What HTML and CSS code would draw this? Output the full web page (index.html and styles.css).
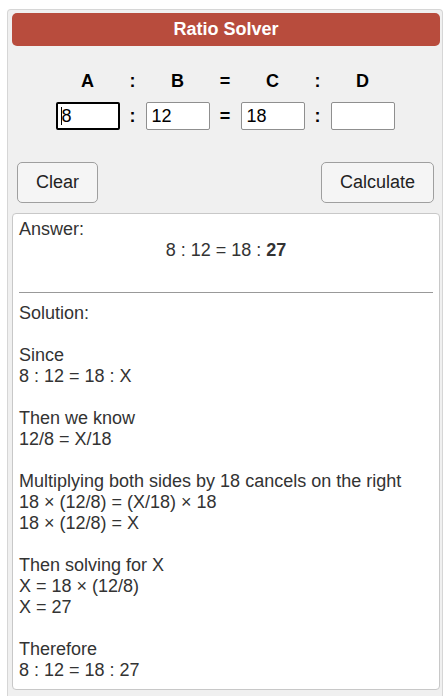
FILE: index.html
```html
<!DOCTYPE html>
<html>
<head>
<meta charset="utf-8">
<link rel="stylesheet" href="styles.css">
</head>
<body>
<div class="panel">
  <div class="header">Ratio Solver</div>
  <div class="ratio">
    <div class="lbl">A</div><div class="lbl">:</div><div class="lbl">B</div><div class="lbl">=</div><div class="lbl">C</div><div class="lbl">:</div><div class="lbl">D</div>
    <div class="inwrap"><input class="num focused" type="text" value="8"><span class="caret"></span></div>
    <div class="sep">:</div>
    <div class="inwrap"><input class="num" type="text" value="12"></div>
    <div class="sep">=</div>
    <div class="inwrap"><input class="num" type="text" value="18"></div>
    <div class="sep">:</div>
    <div class="inwrap"><input class="num" type="text" value=""></div>
  </div>
  <div class="buttons">
    <button class="btn">Clear</button>
    <button class="btn">Calculate</button>
  </div>
  <div class="result">
    <div>Answer:</div>
    <div class="answer">8 : 12 = 18 : <b>27</b></div>
    <hr class="rule">
    <div class="solution">Solution:<br><br>Since<br>8 : 12 = 18 : X<br><br>Then we know<br>12/8 = X/18<br><br>Multiplying both sides by 18 cancels on the right<br>18 × (12/8) = (X/18) × 18<br>18 × (12/8) = X<br><br>Then solving for X<br>X = 18 × (12/8)<br>X = 27<br><br>Therefore<br>8 : 12 = 18 : 27</div>
  </div>
</div>
</body>
</html>
```
FILE: styles.css
```css
html, body {
  margin: 0;
  padding: 0;
  background: #fff;
  font-family: "Liberation Sans", Arial, sans-serif;
}
.panel {
  margin: 9px 2px 0 7px;
  border: 1px solid #d6d6d6;
  border-bottom: none;
  border-radius: 4px 4px 0 0;
  background: #f0f0f0;
  padding: 3px 2px 10px 4px;
  min-height: 700px;
  box-sizing: border-box;
}
.header {
  height: 33px;
  background: #b84c3d;
  border-radius: 5px;
  color: #fff;
  font-weight: bold;
  font-size: 18px;
  line-height: 33px;
  text-align: center;
}
.ratio {
  display: grid;
  grid-template-columns: 64px 26px 64px 31px 64px 26px 64px;
  justify-content: center;
  margin-top: 24px;
  padding-right: 2px;
  row-gap: 10px;
}
.lbl {
  text-align: center;
  font-weight: bold;
  font-size: 18px;
  line-height: 22px;
  color: #000;
}
.sep {
  text-align: center;
  font-weight: bold;
  font-size: 18px;
  line-height: 28px;
}
.inwrap {
  position: relative;
  height: 28px;
}
.num {
  width: 64px;
  height: 28px;
  box-sizing: border-box;
  border: 1px solid #8f8f8f;
  border-radius: 2px;
  background: #fff;
  font-family: "Liberation Sans", Arial, sans-serif;
  font-size: 18px;
  padding: 0 5px;
  margin: 0;
  color: #000;
  outline: none;
}
.num.focused {
  border: 2px solid #000;
  padding: 0 4px;
}
.caret {
  position: absolute;
  left: 5px;
  top: 5px;
  width: 1px;
  height: 18px;
  background: #000;
}
.buttons {
  display: flex;
  justify-content: space-between;
  margin: 32px 6px 0 5px;
}
.btn {
  height: 41px;
  box-sizing: border-box;
  border: 1px solid #9f9f9f;
  border-radius: 5px;
  background: #f5f5f5;
  font-family: "Liberation Sans", Arial, sans-serif;
  font-size: 18px;
  color: #222;
  padding: 0 18px;
}
.result {
  margin-top: 10px;
  background: #fff;
  border: 1px solid #c8c8c8;
  border-radius: 4px;
  padding: 5px 6px 8px 6px;
  font-size: 18px;
  line-height: 21px;
  color: #333;
}
.answer {
  text-align: center;
  margin-top: 0;
}
.rule {
  border: none;
  border-top: 1px solid #999;
  margin: 31px 0 10px 0;
  height: 0;
}
.solution {
  white-space: normal;
}
```
